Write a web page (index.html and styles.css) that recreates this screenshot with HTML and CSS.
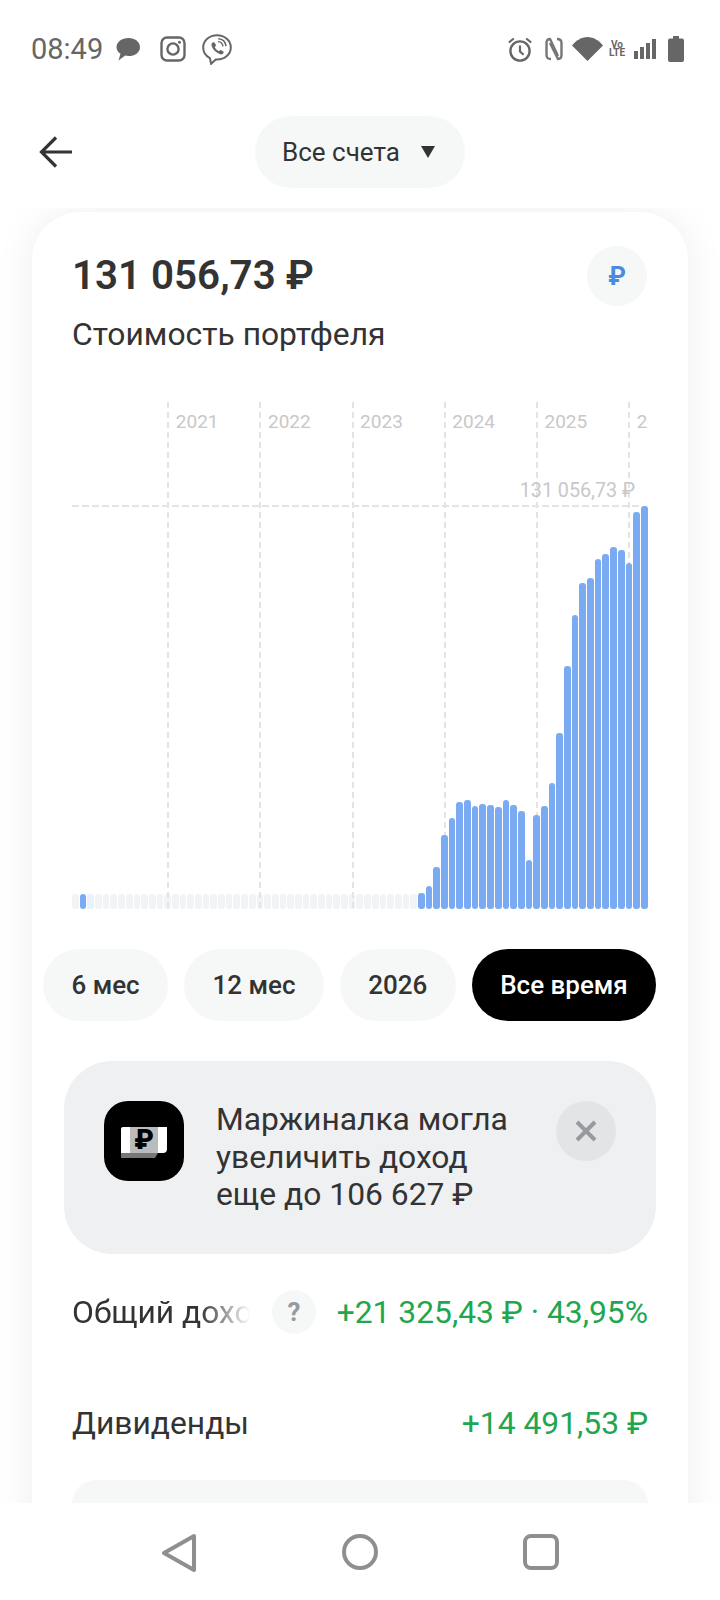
FILE: index.html
```html
<!DOCTYPE html>
<html lang="ru">
<head>
<meta charset="utf-8">
<title>Портфель</title>
<link rel="stylesheet" href="styles.css">
</head>
<body>
<div class="screen">
  <div class="status">
    <div class="status-left">
      <span class="time">08:49</span>
      <svg class="ic-msg" width="24" height="24" viewBox="0 0 24 24"><path fill="#666" d="M12.500 1C19 1 24 4.900 24 10.200 24 15.500 18.800 19 12.500 19c-1.200 0-2.300-.1-3.300-.4L2.500 23.500l2-6.800C1.800 15 .5 12.800.5 10.200.5 4.900 6 1 12.500 1z"/></svg>
      <svg class="ic-insta" width="26" height="26" viewBox="0 0 26 26" fill="none" stroke="#666"><rect x="1.500" y="1.500" width="23" height="23" rx="5.500" stroke-width="2.400"/><circle cx="13" cy="13" r="5.600" stroke-width="2.400"/><circle cx="19.500" cy="6.300" r="1.500" fill="#666" stroke="none"/></svg>
      <svg class="ic-viber" width="30" height="31" viewBox="0 0 30 31" fill="none" stroke="#666" stroke-width="2"><path d="M15 1.200C7.300 1.200 1.200 6.600 1.200 13.400c0 4.600 2.700 8.500 6.700 10.700l1.200 5.700 4.700-4.400c.4 0 .8 0 1.200 0 7.700 0 13.800-5.300 13.800-12S22.700 1.200 15 1.200z"/><path fill="#666" stroke="none" d="M10.600 8.800c1-.8 1.800-.6 2.400.5l.8 1.500c.3.700.1 1.200-.5 1.700-.5.400-.5.800-.2 1.300.9 1.500 2 2.500 3.300 3.200.5.200.8.100 1.200-.4.500-.6 1.100-.8 1.800-.4l1.500 1c1 .7 1 1.400.2 2.300-1 1-2.200 1.100-3.500.6-3.900-1.500-6.800-4.400-8-8-.4-1.400-.1-2.600 1-3.600z"/><path stroke-width="1.400" d="M16 7.600c2.700.2 4.700 2 5 4.700M16.300 4.700c4.300.3 7.300 3.100 7.700 7.400"/></svg>
    </div>
    <div class="status-right">
      <svg width="26" height="26" viewBox="0 0 26 26" fill="none" stroke="#666"><circle cx="13" cy="15" r="9.600" stroke-width="2.400"/><path stroke-width="2.200" d="M13 9.500v6l3.600 3.300M1.800 6.500l5-4M24.200 6.500l-5-4"/></svg>
      <svg class="ic-nfc" width="18" height="24" viewBox="0 0 18 24" fill="none" stroke="#777" stroke-width="2.400"><path d="M6 22C3 22 1.500 21 1.500 18V6C1.500 3 3 2 5 2L13 19M12 2c3 0 4.500 1 4.500 4v12c0 3-1.500 4-3.500 4L5 6"/></svg>
      <svg class="ic-wifi" width="31" height="24" viewBox="0 0 31 24"><path fill="#666" d="M0 8.500C4 3.500 9.500 0 15.500 0S27 3.500 31 8.500L15.500 24z"/></svg>
      <div class="volte"><span>Vo</span><span>LTE</span></div>
      <svg class="ic-signal" width="22" height="20" viewBox="0 0 22 20"><path fill="#666" d="M0 12h4v8H0zM6 8h4v12H6zM12 4h4v16h-4zM18 0h4v20h-4z"/></svg>
      <svg class="ic-batt" width="16" height="26" viewBox="0 0 16 26"><path fill="#666" d="M5 0h6v2.500h3a2 2 0 0 1 2 2V24a2 2 0 0 1-2 2H2a2 2 0 0 1-2-2V4.500a2 2 0 0 1 2-2h3z"/></svg>
    </div>
  </div>

  <header class="topbar">
    <svg class="back" width="34" height="32" viewBox="0 0 34 32" fill="none" stroke="#333" stroke-width="3.200"><path d="M33 16H3M17 1.500 2.500 16 17 30.500"/></svg>
    <div class="account"><span>Все счета</span><i class="caret"></i></div>
  </header>

  <main class="content">
    <section class="card">
      <div class="summary">
        <div class="total">131 056,73 ₽</div>
        <div class="currency">₽</div>
      </div>
      <div class="caption">Стоимость портфеля</div>

      <div class="chart">
        <div class="vline" style="left:95.2px"><span>2021</span></div>
        <div class="vline" style="left:187.4px"><span>2022</span></div>
        <div class="vline" style="left:279.5px"><span>2023</span></div>
        <div class="vline" style="left:371.7px"><span>2024</span></div>
        <div class="vline" style="left:463.9px"><span>2025</span></div>
        <div class="vline" style="left:556.1px"><span>2026</span></div>
        <div class="hline"></div>
        <div class="maxlabel">131 056,73 ₽</div>
        <div class="bars">
          <i class="idle"></i><i class="bar" style="height:15px"></i><i class="idle pale"></i>
          <i class="idle"></i><i class="idle"></i><i class="idle"></i><i class="idle"></i><i class="idle"></i><i class="idle"></i><i class="idle"></i><i class="idle"></i><i class="idle"></i>
          <i class="idle"></i><i class="idle"></i><i class="idle"></i><i class="idle"></i><i class="idle"></i><i class="idle"></i><i class="idle"></i><i class="idle"></i><i class="idle"></i><i class="idle"></i>
          <i class="idle"></i><i class="idle"></i><i class="idle"></i><i class="idle"></i><i class="idle"></i><i class="idle"></i><i class="idle"></i><i class="idle"></i><i class="idle"></i><i class="idle"></i>
          <i class="idle"></i><i class="idle"></i><i class="idle"></i><i class="idle"></i><i class="idle"></i><i class="idle"></i><i class="idle"></i><i class="idle"></i><i class="idle"></i><i class="idle"></i>
          <i class="idle"></i><i class="idle"></i><i class="idle"></i>
          <i class="bar" style="height:16px"></i><i class="bar" style="height:23px"></i><i class="bar" style="height:42px"></i><i class="bar" style="height:74px"></i><i class="bar" style="height:91px"></i><i class="bar" style="height:107px"></i><i class="bar" style="height:109px"></i><i class="bar" style="height:103px"></i><i class="bar" style="height:105px"></i><i class="bar" style="height:104px"></i><i class="bar" style="height:102px"></i><i class="bar" style="height:109px"></i><i class="bar" style="height:104px"></i><i class="bar" style="height:98px"></i><i class="bar" style="height:49px"></i><i class="bar" style="height:94px"></i><i class="bar" style="height:103px"></i><i class="bar" style="height:126px"></i><i class="bar" style="height:176px"></i><i class="bar" style="height:243px"></i><i class="bar" style="height:294px"></i><i class="bar" style="height:326px"></i><i class="bar" style="height:331px"></i><i class="bar" style="height:350px"></i><i class="bar" style="height:355px"></i><i class="bar" style="height:362px"></i><i class="bar" style="height:359px"></i><i class="bar" style="height:346px"></i><i class="bar" style="height:397px"></i><i class="bar" style="height:403px"></i>
        </div>
      </div>

      <div class="ranges">
        <div class="range">6 мес</div>
        <div class="range">12 мес</div>
        <div class="range">2026</div>
        <div class="range active">Все время</div>
      </div>

      <div class="banner">
        <div class="banner-icon">
          <svg class="banner-glyph" width="46" height="32" viewBox="0 0 46 32"><path fill="#fff" d="M2 0h44v22a4 4 0 0 1-4 4H0V2a2 2 0 0 1 2-2z"/><path fill="#bbb" d="M9 0h28v26H9z"/><path fill="#777" d="M0 26h37l-3 5H0z"/><text class="banner-rub" x="23" y="22" text-anchor="middle">₽</text></svg>
        </div>
        <div class="banner-text">Маржиналка могла<br>увеличить доход<br>еще до 106 627 ₽</div>
        <div class="close">
          <svg width="22" height="22" viewBox="0 0 22 22" fill="none" stroke="#96999f" stroke-width="4"><path d="M2 2l18 18M20 2 2 20"/></svg>
        </div>
      </div>

      <div class="row first">
        <div class="row-label fade">Общий доход</div>
        <div class="hint">?</div>
        <div class="row-value">+21 325,43 ₽ · 43,95%</div>
      </div>
      <div class="row second">
        <div class="row-label">Дивиденды</div>
        <div class="row-value">+14 491,53 ₽</div>
      </div>
      <div class="next-block"></div>
    </section>
  </main>

  <nav class="navbar">
    <svg width="37" height="40" viewBox="0 0 37 40" fill="none" stroke="#8f8f8f" stroke-width="4" stroke-linejoin="round"><path d="M33 3 3 20l30 17z"/></svg>
    <svg width="38" height="38" viewBox="0 0 38 38" fill="none" stroke="#8f8f8f" stroke-width="4"><circle cx="19" cy="19" r="16"/></svg>
    <svg width="38" height="38" viewBox="0 0 38 38" fill="none" stroke="#8f8f8f" stroke-width="4"><rect x="3" y="3" width="32" height="32" rx="6"/></svg>
  </nav>
</div>
</body>
</html>
```

FILE: styles.css
```css
* { box-sizing: border-box; }
html, body { margin: 0; padding: 0; background: #fff; }
body { font-family: Roboto, "Noto Sans", sans-serif; color: #333; }

.screen {
  width: 720px;
  height: 1600px;
  display: flex;
  flex-direction: column;
  overflow: hidden;
  background: #fff;
}

/* status bar */
.status {
  height: 98px;
  flex: none;
  padding: 0 36px 0 31px;
  display: flex;
  align-items: center;
  justify-content: space-between;
}
.status-left, .status-right { display: flex; align-items: center; }
.time { font-size: 29px; color: #666; line-height: 32px; width: 85px; }
.ic-insta { margin-left: 20px; }
.ic-viber { margin-left: 16px; }
.ic-nfc { margin-left: 12px; }
.ic-wifi { margin-left: 9px; }
.volte {
  margin-left: 7px;
  width: 14px;
  display: flex;
  flex-direction: column;
  align-items: center;
  font-size: 10px;
  line-height: 8.500px;
  font-weight: 700;
  color: #666;
}
.ic-signal { margin-left: 10px; }
.ic-batt { margin-left: 12px; }

/* header */
.topbar {
  flex: none;
  height: 72px;
  margin: 18px 0 20px;
  padding-left: 39px;
  display: flex;
  align-items: center;
}
.account {
  margin-left: 182px;
  width: 210px;
  height: 72px;
  border-radius: 36px;
  background: #f6f7f7;
  display: flex;
  align-items: center;
  padding-left: 27px;
  font-size: 26px;
  color: #333;
}
.caret {
  margin-left: 21px;
  width: 0;
  height: 0;
  border-left: 7.500px solid transparent;
  border-right: 7.500px solid transparent;
  border-top: 12px solid #333;
}

/* scroll area */
.content {
  flex: 1;
  min-height: 0;
  overflow: hidden;
  padding: 4px 32px 0;
}
.card {
  background: #fff;
  border-radius: 48px 48px 0 0;
  box-shadow: 0 0 40px rgba(0, 0, 0, .07);
  padding: 34px 40px 0;
  height: 1500px;
}
.summary {
  display: flex;
  align-items: center;
  justify-content: space-between;
  height: 60px;
}
.total { font-size: 40.300px; font-weight: 600; line-height: 44px; color: #333; }
.currency {
  width: 60px;
  height: 60px;
  border-radius: 50%;
  background: #f6f7f7;
  color: #4a8ae0;
  font-size: 25px;
  font-weight: 700;
  display: flex;
  align-items: center;
  justify-content: center;
  margin-right: 1px;
}
.caption { margin-top: 9px; font-size: 31.800px; line-height: 38px; color: #333; }

/* chart */
.chart {
  position: relative;
  margin-top: 49px;
  height: 507px;
  overflow: hidden;
}
.vline {
  position: absolute;
  top: 0;
  bottom: 0;
  width: 2px;
  background: repeating-linear-gradient(to bottom, #e4e4e4 0 6px, transparent 6px 10px);
}
.vline span {
  position: absolute;
  left: 8.600px;
  top: 9px;
  font-size: 19px;
  line-height: 22px;
  color: #c8c8c8;
}
.hline {
  position: absolute;
  left: 0;
  right: 8px;
  top: 103px;
  height: 2px;
  background: repeating-linear-gradient(to right, #e4e4e4 0 7px, transparent 7px 10px);
}
.maxlabel {
  position: absolute;
  right: 13px;
  top: 78px;
  font-size: 19.700px;
  line-height: 22px;
  color: #c8c8c8;
}
.bars {
  position: relative;
  height: 100%;
  display: flex;
  align-items: flex-end;
  gap: 1px;
}
.bars i { display: block; flex: 1; border-radius: 3px; }
.bar { background: #7aabf2; }
.idle { height: 15px; background: rgba(225, 228, 232, .45); }
.idle.pale { background: #e9f1fc; }

/* range pills */
.ranges {
  margin: 40px 0 0 -29px;
  display: flex;
  gap: 16px;
}
.range {
  height: 72px;
  padding: 0 28.400px;
  border-radius: 36px;
  background: #f6f7f7;
  display: flex;
  align-items: center;
  font-size: 26px;
  font-weight: 500;
  color: #333;
  white-space: nowrap;
}
.range.active { background: #000; color: #fff; }

/* banner */
.banner {
  margin: 40px -8px 0;
  height: 193px;
  padding: 40px;
  border-radius: 48px;
  background: #eff0f2;
  display: flex;
  align-items: flex-start;
}
.banner-icon {
  flex: none;
  width: 80px;
  height: 80px;
  border-radius: 24px;
  background: #000;
  display: flex;
  align-items: center;
  justify-content: center;
}
.banner-glyph { margin-top: 3px; }
.banner-rub { font-family: Roboto, sans-serif; font-size: 27px; font-weight: 900; fill: #000; }
.banner-text {
  flex: 1;
  margin: 0 0 0 32px;
  font-size: 31.800px;
  line-height: 37.500px;
  color: #333;
}
.close {
  flex: none;
  width: 60px;
  height: 60px;
  border-radius: 50%;
  background: #e3e4e6;
  display: flex;
  align-items: center;
  justify-content: center;
}

/* rows */
.row {
  display: flex;
  align-items: center;
  height: 44px;
  font-size: 31.800px;
  line-height: 38px;
}
.row.first { margin-top: 36px; }
.row.second { margin-top: 67px; justify-content: space-between; }
.row-label { color: #333; white-space: nowrap; }
.fade {
  width: 178px;
  overflow: hidden;
  -webkit-mask-image: linear-gradient(to right, #000 72%, transparent 100%);
  mask-image: linear-gradient(to right, #000 72%, transparent 100%);
}
.hint {
  flex: none;
  margin-left: 22px;
  width: 44px;
  height: 44px;
  border-radius: 50%;
  background: #f6f7f7;
  color: #96999f;
  font-size: 26px;
  font-weight: 700;
  display: flex;
  align-items: center;
  justify-content: center;
}
.row-value { margin-left: auto; color: #1fa64e; white-space: nowrap; }
.next-block {
  margin-top: 35px;
  height: 160px;
  border-radius: 24px;
  background: #f6f7f7;
}

/* navigation */
.navbar {
  flex: none;
  height: 97px;
  background: #fff;
  position: relative;
  display: flex;
  align-items: flex-start;
  padding: 30px 0 0 161px;
  gap: 143px;
}
```
